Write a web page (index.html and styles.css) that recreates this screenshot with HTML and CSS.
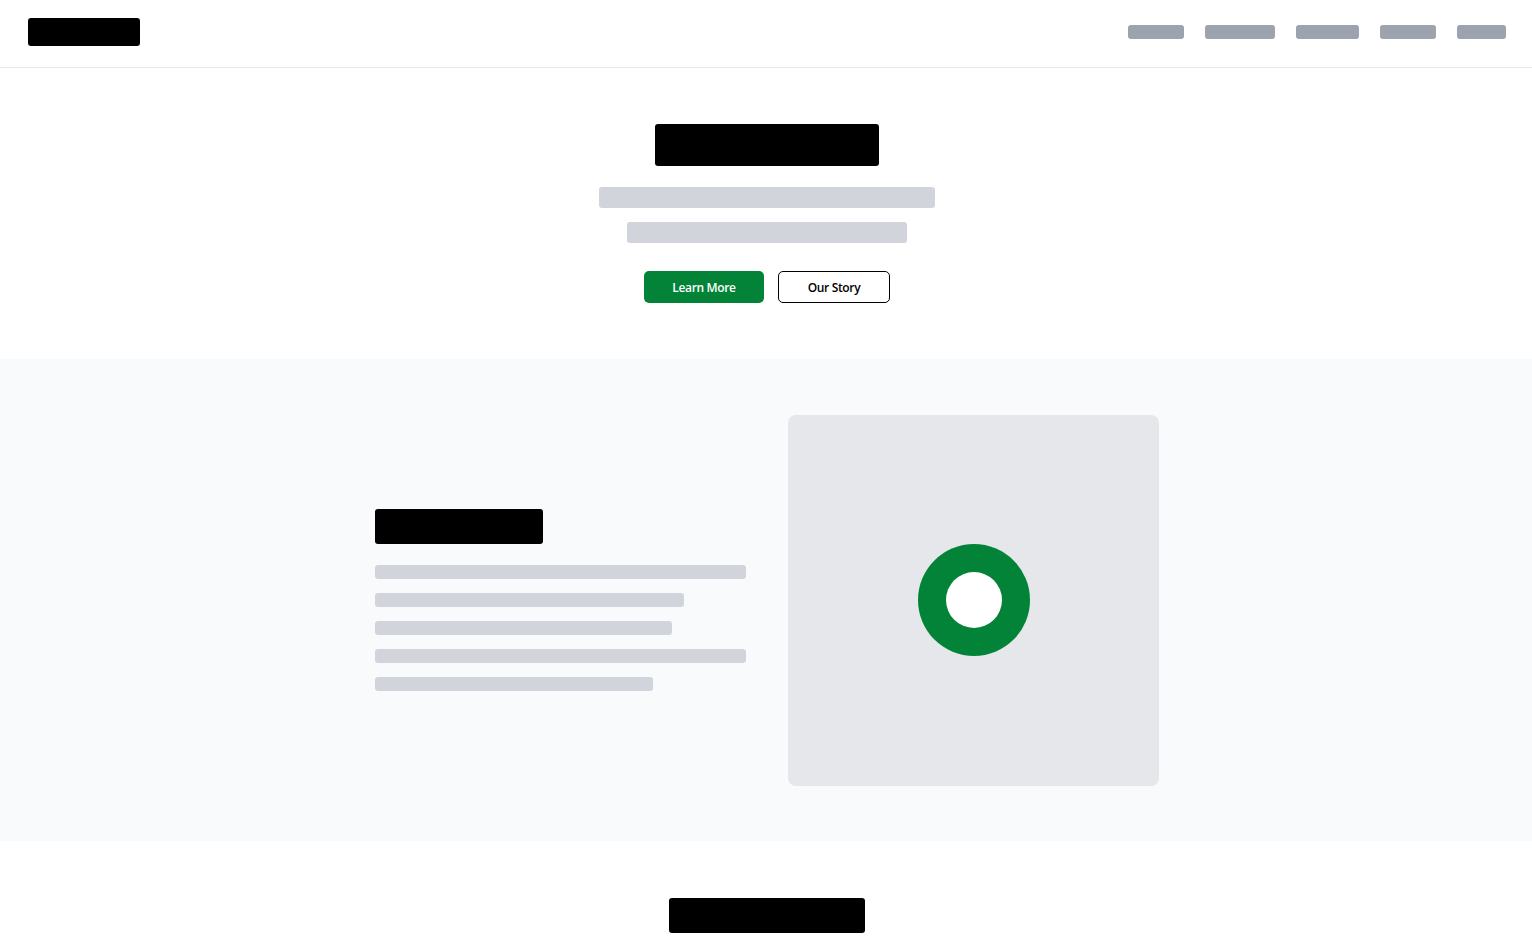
FILE: index.html
```html
<!DOCTYPE html>
<html lang="en">
<head>
<meta charset="utf-8">
<title>Page</title>
<link rel="stylesheet" href="styles.css">
</head>
<body>
<header class="site-header">
  <div class="logo"></div>
  <nav class="nav">
    <span class="nav-item w56"></span>
    <span class="nav-item w70"></span>
    <span class="nav-item w63"></span>
    <span class="nav-item w56"></span>
    <span class="nav-item w49"></span>
  </nav>
</header>
<main>
  <section class="hero">
    <div class="hero-title"></div>
    <div class="hero-line l1"></div>
    <div class="hero-line l2"></div>
    <div class="hero-actions">
      <a class="btn btn-primary">Learn More</a>
      <a class="btn btn-outline">Our Story</a>
    </div>
  </section>
  <section class="feature">
    <div class="feature-grid">
      <div class="feature-text">
        <div class="feature-title"></div>
        <div class="text-lines">
          <div class="text-line full"></div>
          <div class="text-line w309"></div>
          <div class="text-line w297"></div>
          <div class="text-line full"></div>
          <div class="text-line w278"></div>
        </div>
      </div>
      <div class="feature-media">
        <div class="ring"><div class="ring-hole"></div></div>
      </div>
    </div>
  </section>
  <section class="next">
    <div class="next-title"></div>
  </section>
</main>
</body>
</html>
```
FILE: styles.css
```css
* { box-sizing: border-box; }
html, body { margin: 0; padding: 0; background: #ffffff; }
body { font-family: "Open Sans", "Noto Sans", Arial, sans-serif; }

.site-header {
  height: 68px;
  border-bottom: 1px solid #e5e7eb;
  display: flex;
  align-items: flex-start;
  justify-content: space-between;
  padding: 18px 26px 0 28px;
}
.logo { width: 112px; height: 28px; background: #000; border-radius: 3px; }
.nav { display: flex; gap: 21px; margin-top: 7px; }
.nav-item { display: block; height: 14px; background: #9ca3af; border-radius: 3px; }
.w56 { width: 56px; }
.w70 { width: 70px; }
.w63 { width: 63px; }
.w49 { width: 49px; }

.hero {
  display: flex;
  flex-direction: column;
  align-items: center;
  padding: 56px 0 56px 2px;
}
.hero-title { width: 224px; height: 42px; background: #000; border-radius: 3px; }
.hero-line { height: 21px; background: #d1d5db; border-radius: 3px; }
.hero-line.l1 { width: 336px; margin-top: 21px; }
.hero-line.l2 { width: 280px; margin-top: 14px; }
.hero-actions { display: flex; gap: 14px; margin-top: 28px; }
.btn {
  height: 32px;
  display: flex;
  align-items: center;
  justify-content: center;
  font-size: 12px;
  font-weight: 600;
  border-radius: 5px;
  text-decoration: none;
  letter-spacing: -0.35px;
}
.btn-primary { width: 120px; background: #028337; color: #fff; }
.btn-outline { width: 112px; background: #fff; color: #000; border: 1px solid #000; }

.feature {
  background: #f9fafb;
  padding: 56px 0 55px;
}
.feature-grid {
  display: grid;
  grid-template-columns: 371px 371px;
  column-gap: 42px;
  justify-content: center;
  align-items: center;
  margin-left: 1px;
}
.feature-text { padding-bottom: 1px; }
.feature-title { width: 168px; height: 35px; background: #000; border-radius: 3px; }
.text-lines { display: flex; flex-direction: column; gap: 14px; margin-top: 21px; }
.text-line { height: 14px; background: #d1d5db; border-radius: 3px; }
.text-line.full { width: 371px; }
.w309 { width: 309px; }
.w297 { width: 297px; }
.w278 { width: 278px; }

.feature-media {
  width: 371px;
  height: 371px;
  padding: 0 0 1px 1px;
  background: #e5e7eb;
  border-radius: 8px;
  display: flex;
  align-items: center;
  justify-content: center;
}
.ring {
  width: 112px;
  height: 112px;
  border-radius: 50%;
  background: #028337;
  display: flex;
  align-items: center;
  justify-content: center;
}
.ring-hole { width: 56px; height: 56px; border-radius: 50%; background: #fff; }

.next {
  display: flex;
  justify-content: center;
  padding: 57px 0 40px 2px;
}
.next-title { width: 196px; height: 35px; background: #000; border-radius: 3px; }
```
